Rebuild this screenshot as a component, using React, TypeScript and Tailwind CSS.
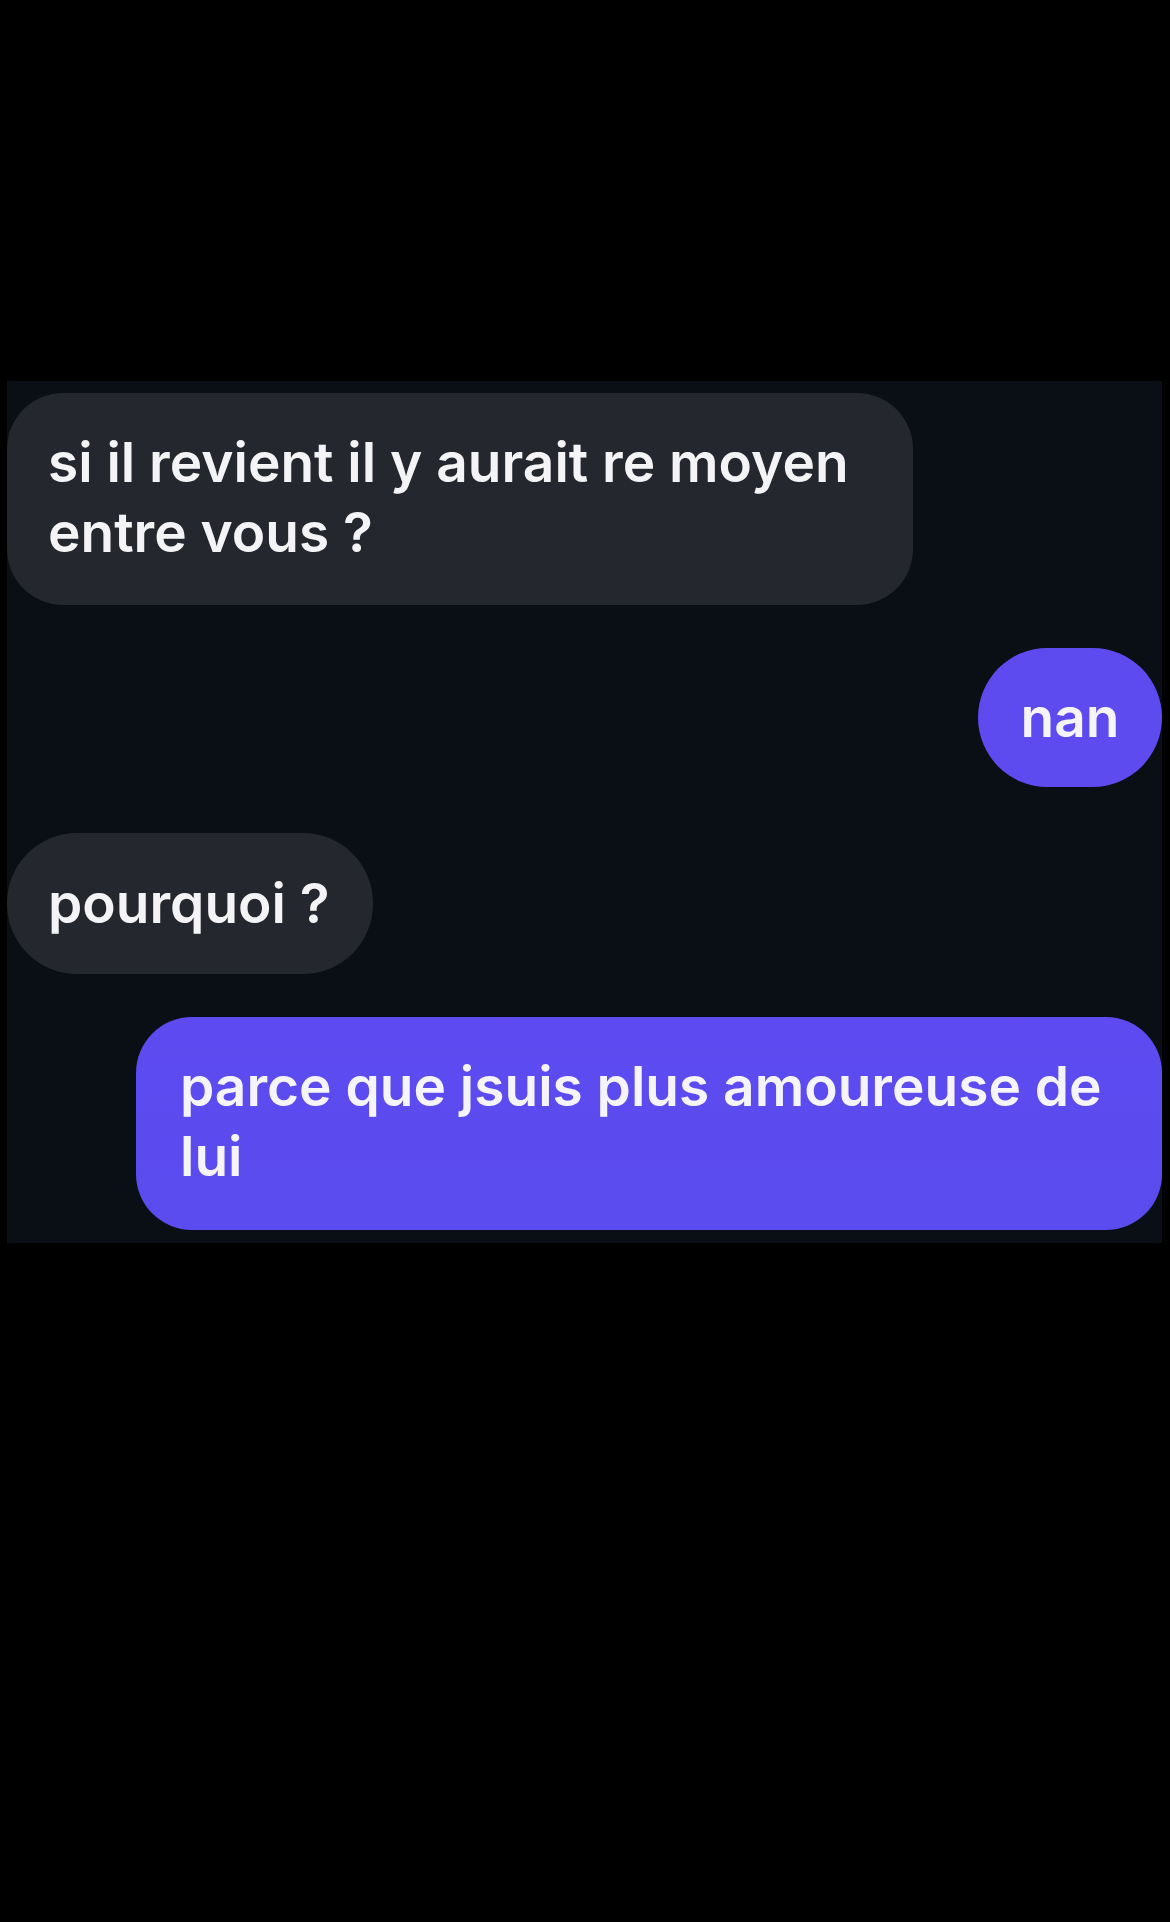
import React from "react";

const font = { fontFamily: "Inter, 'Noto Sans', sans-serif" };

export default function App() {
  return (
    <div className="w-[1170px] h-[1922px] bg-black pt-[381px] pl-[7px]" style={font}>
      <div className="w-[1155px] h-[862px] bg-[#0a0e15] flex flex-col pt-[12px]">
        <div className="self-start w-[906px] h-[212px] rounded-[56px] bg-[#24272e] pl-[41px] pr-[20px] pt-[34px] pb-[38px] text-[55px] leading-[70px] font-semibold text-[#f4f4f6]">
          si il revient il y aurait re moyen
          <br />
          entre vous ?
        </div>
        <div className="self-end mt-[43px] h-[139px] w-[184px] rounded-[70px] bg-[#5e4bf0] flex items-center justify-center pb-[2px] text-[55px] leading-[70px] font-semibold text-[#f6f4fb]">
          nan
        </div>
        <div className="self-start mt-[46px] h-[141px] w-[366px] rounded-[70px] bg-[#24272e] pl-[41px] pb-[2px] flex items-center text-[55px] leading-[70px] font-semibold text-[#f4f4f6]">
          pourquoi ?
        </div>
        <div className="self-end mt-[43px] w-[1026px] h-[213px] rounded-[56px] bg-gradient-to-b from-[#5d4bf0] to-[#5a4cef] pl-[44px] pr-[10px] pt-[34px] pb-[38px] text-[55px] leading-[70px] font-semibold text-[#f6f4fb]">
          parce que jsuis plus amoureuse de
          <br />
          lui
        </div>
      </div>
    </div>
  );
}
